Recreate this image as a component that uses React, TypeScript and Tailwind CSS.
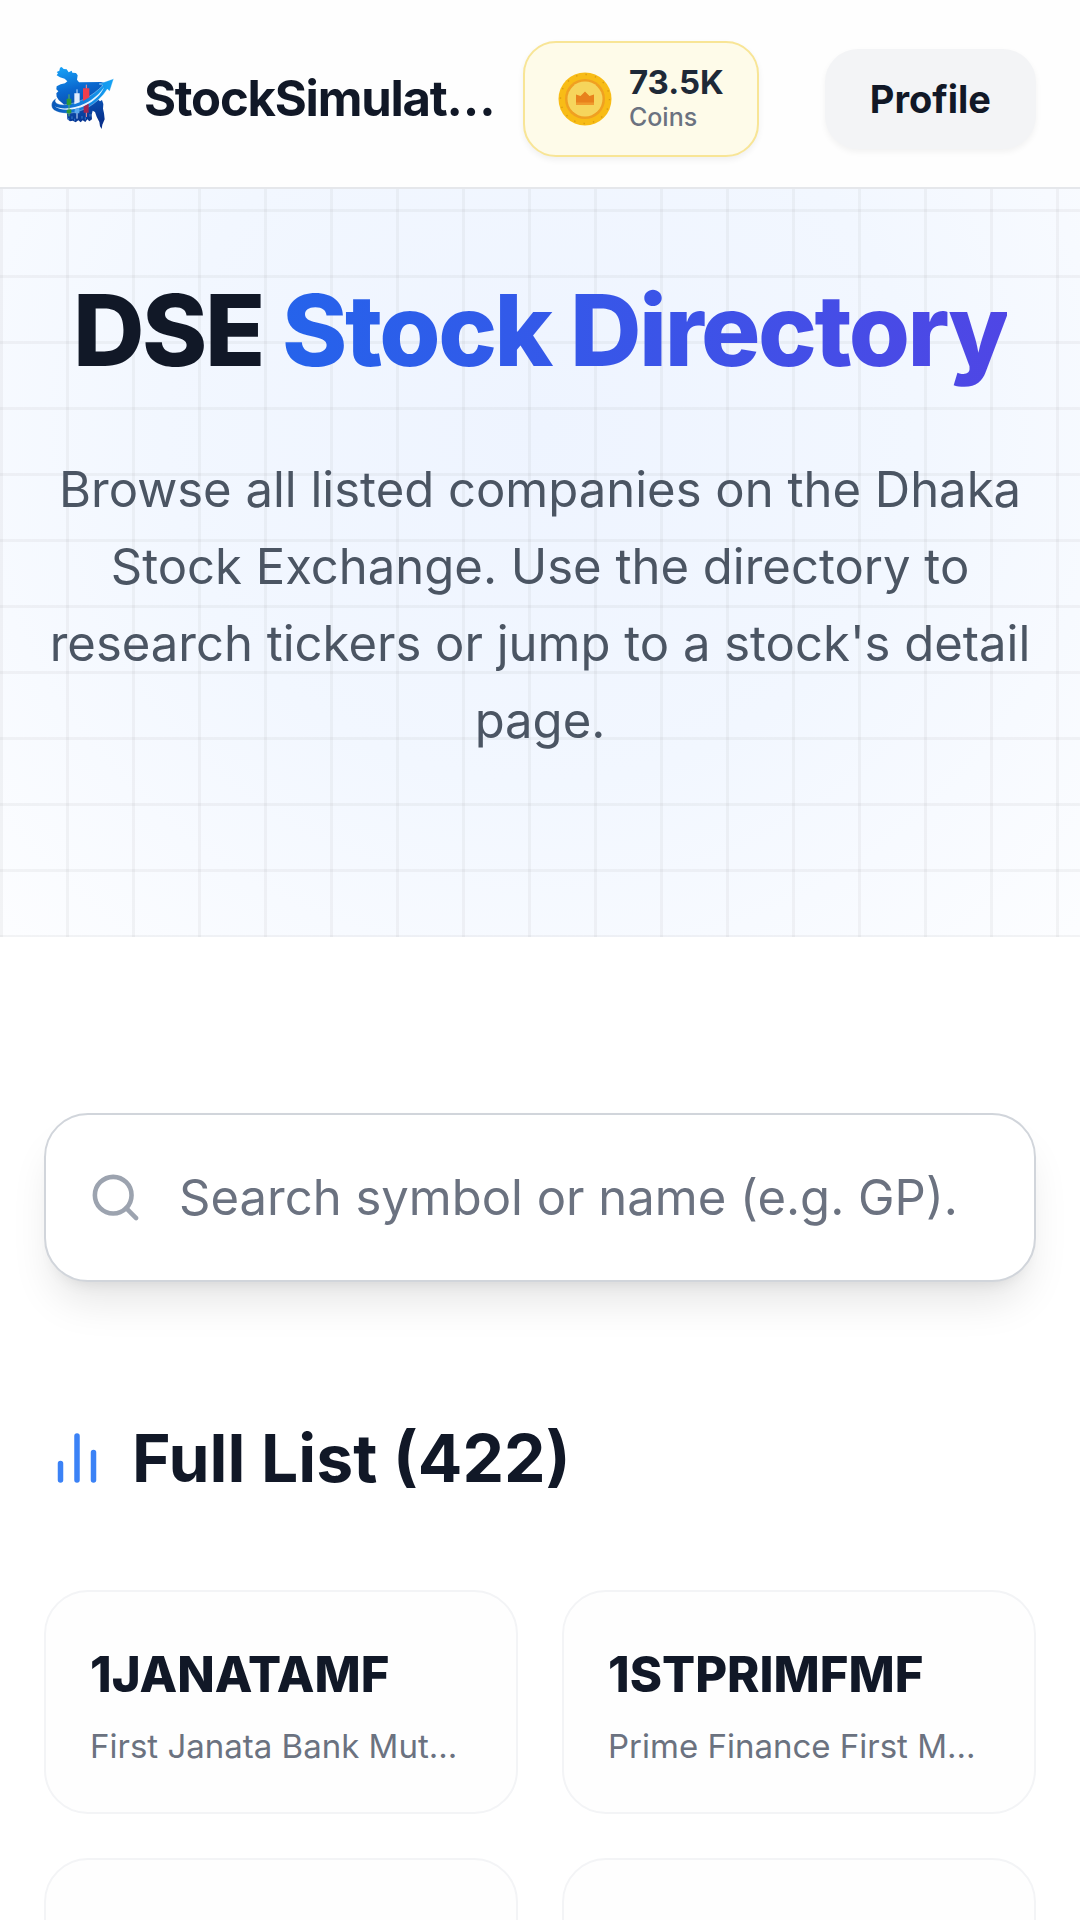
import { Search } from "lucide-react";

const stocks = [
  { symbol: "1JANATAMF", name: "First Janata Bank Mutual Fund" },
  { symbol: "1STPRIMFMF", name: "Prime Finance First Mutual Fund" },
];

function Logo() {
  return (
    <svg viewBox="42 15 264 264" className="size-22 shrink-0" aria-hidden="true">
      <defs>
        <linearGradient id="land" x1="0" y1="0" x2="0.2" y2="1">
          <stop offset="0" stopColor="#18a6fa" />
          <stop offset="0.4" stopColor="#0a68cf" />
          <stop offset="1" stopColor="#08318c" />
        </linearGradient>
        <linearGradient id="swoosh" x1="0" y1="0" x2="1" y2="0">
          <stop offset="0" stopColor="#0a55b4" />
          <stop offset="0.35" stopColor="#0f74d6" />
          <stop offset="1" stopColor="#15a4f5" />
        </linearGradient>
      </defs>
      <path
        d="M95 51L101 57 110 58 116 67 125 62 127 68 138 69 143 76 141 89 147 97 215 96 232 99 226 110 216 122 206 133 199 143 205 149 210 154 216 150 220 162 219 176 222 190 224 208 217 224 215 237 210 229 208 216 200 200 195 186 188 182 185 194 186 208 178 214 172 208 166 216 158 211 152 217 145 211 137 217 128 212 120 214 112 208 111 192 108 176 100 162 86 150 80 140 79 130 85 124 79 118 80 109 92 103 105 100 112 94 104 86 90 82 80 76 84 70 80 66 88 62 90 53z"
        fill="url(#land)"
      />
      <path
        d="M80 145C62 152 60 172 73 181 96 196 136 191 168 175 194 162 218 140 232 117L239 124 251 86 207 102 219 106C203 122 183 138 161 148 134 160 106 167 89 163 75 160 73 152 80 145z"
        fill="url(#swoosh)"
        stroke="#fff"
        strokeWidth="1"
      />
      <path d="M74 169C96 180 134 176 166 160 190 148 210 130 222 112 214 134 192 154 166 167 132 182 90 184 74 169z" fill="#e6f3ff" />
      <path d="M117 133v66" stroke="#57b657" strokeWidth="3" />
      <path d="M110 146h14v18l-14 1z" fill="#2f9a35" />
      <path d="M110 180l14-2v12h-14z" fill="#2f9a35" />
      <path d="M141 118v14M141 188v18" stroke="#cfe5ff" strokeWidth="3" />
      <path d="M133 130h16v27l-16 6z" fill="#e3edfd" />
      <path d="M134 178l14-5v17h-14z" fill="#58a8ee" />
      <path d="M169 104v12M169 184v17" stroke="#ff8d93" strokeWidth="3" />
      <path d="M159 115h19v27l-19 11z" fill="#ee3e4c" />
      <path d="M161 169l15-8v27h-15z" fill="#a3264e" />
      <path d="M116 204v6M126 199v8M134 206v6M156 198v8M166 202v7M180 192v8" stroke="#4aa3ee" strokeWidth="2" />
    </svg>
  );
}

function Coin() {
  return (
    <svg viewBox="0 0 54 54" className="size-[54px] shrink-0" aria-hidden="true">
      <circle cx="27" cy="27" r="26.5" fill="#f8bc16" />
      <circle cx="27" cy="27" r="24.5" fill="none" stroke="#d99a12" strokeWidth="1.4" strokeDasharray="1.4 8.2" />
      <circle cx="27" cy="27" r="20" fill="#f0a021" />
      <circle cx="27" cy="27" r="17.5" fill="#f6d55c" />
      <path d="M18 22.5l4.5 1.5 4.5-4.5 4.5 4.5 4.5-1.5V33H18z" fill="#e8811c" />
      <path d="M18 30.5h18V33H18z" fill="#f09a2c" />
    </svg>
  );
}

function Bars() {
  return (
    <svg
      viewBox="0 0 24 24"
      className="size-[66px] shrink-0 text-[#3b82f6]"
      fill="none"
      stroke="currentColor"
      strokeWidth="2"
      strokeLinecap="round"
      aria-hidden="true"
    >
      <path d="M6 20v-6M12 20V4M18 20V10" />
    </svg>
  );
}

export default function App() {
  return (
    <div className="h-screen overflow-hidden bg-white font-['Inter',sans-serif] text-[#111827] [font-optical-sizing:none]">
      <header className="flex h-[189px] items-center border-b-2 border-[#e5e7eb] bg-[#fefefe] px-11 pt-[10px]">
        <a href="#" className="flex min-w-0 flex-1 items-center gap-3">
          <Logo />
          <span className="text-[49px] leading-[66px] font-bold tracking-tight whitespace-nowrap">StockSimulat…</span>
        </a>
        <div className="ml-4 flex shrink-0 items-center gap-[66px]">
          <div className="flex h-[116px] items-center gap-[17px] rounded-[33px] border-2 border-[#f8e596] bg-[#fefbe9] px-[33px] shadow-[0_3px_6px_rgb(0_0_0/0.06)]">
            <Coin />
            <div className="pt-1">
              <div className="text-[33px] leading-[33px] font-bold text-[#1f2937]">73.5K</div>
              <div className="text-[25px] leading-[36px] font-medium text-[#6b7280]">Coins</div>
            </div>
          </div>
          <button
            type="button"
            className="rounded-[33px] bg-[#f3f4f6] px-[45px] py-[22px] text-[38px] leading-[56px] font-bold shadow-[0_3px_6px_rgb(0_0_0/0.05)]"
          >
            Profile
          </button>
        </div>
      </header>

      <section className="bg-[linear-gradient(to_right,#80808014_3px,transparent_3px),linear-gradient(to_bottom,#80808014_3px,transparent_3px),radial-gradient(ellipse_70%_95%_at_50%_32%,#eef4ff,#f2f7ff_50%,#fcfdff)] bg-[size:66px_66px,66px_66px,100%_100%] bg-[position:0_0,0_20px,0_0] px-11 pt-[86px] pb-[178px] text-center">
        <h1 className="text-[99px] leading-[110px] font-extrabold tracking-tight whitespace-nowrap">
          DSE{" "}
          <span className="bg-[linear-gradient(to_right,#2563eb,#4f46e5)] bg-clip-text text-transparent">
            Stock Directory
          </span>
        </h1>
        <p className="mt-[66px] text-[49px] leading-[77px] text-[#4b5563]">
          Browse all listed companies on the Dhaka Stock Exchange. Use the directory to research tickers or jump to a
          stock's detail page.
        </p>
      </section>

      <main className="px-11 pt-44">
        <label className="flex h-[169px] items-center gap-9 rounded-[44px] border-2 border-[#d1d5db] bg-white px-[42px] shadow-[0_27px_41px_-8px_rgb(0_0_0/0.1),0_11px_16px_-11px_rgb(0_0_0/0.1)]">
          <Search className="size-[55px] shrink-0 text-[#9ca3af]" aria-hidden="true" />
          <input
            type="text"
            aria-label="Search stocks"
            placeholder="Search symbol or name (e.g. GP)."
            className="min-w-0 flex-1 bg-transparent text-[49px] leading-[77px] outline-none placeholder:text-[#6b7280]"
          />
        </label>

        <h2 className="mt-[132px] flex items-center gap-[22px] text-[66px] leading-[88px] font-bold">
          <Bars />
          Full List (422)
        </h2>

        <ul className="mt-[88px] grid grid-cols-2 gap-11">
          {stocks.map((stock) => (
            <li key={stock.symbol} className="min-w-0">
              <a href="#" className="block rounded-[44px] border-2 border-[#f3f4f6] bg-[#fefefe] p-11">
                <div className="truncate text-[49px] leading-[77px] font-extrabold">{stock.symbol}</div>
                <div className="mt-[11px] truncate text-[33px] leading-[44px] text-[#6b7280]">{stock.name}</div>
              </a>
            </li>
          ))}
          <li className="h-56 rounded-[44px] border-2 border-[#f3f4f6] bg-[#fefefe]" />
          <li className="h-56 rounded-[44px] border-2 border-[#f3f4f6] bg-[#fefefe]" />
        </ul>
      </main>
    </div>
  );
}
